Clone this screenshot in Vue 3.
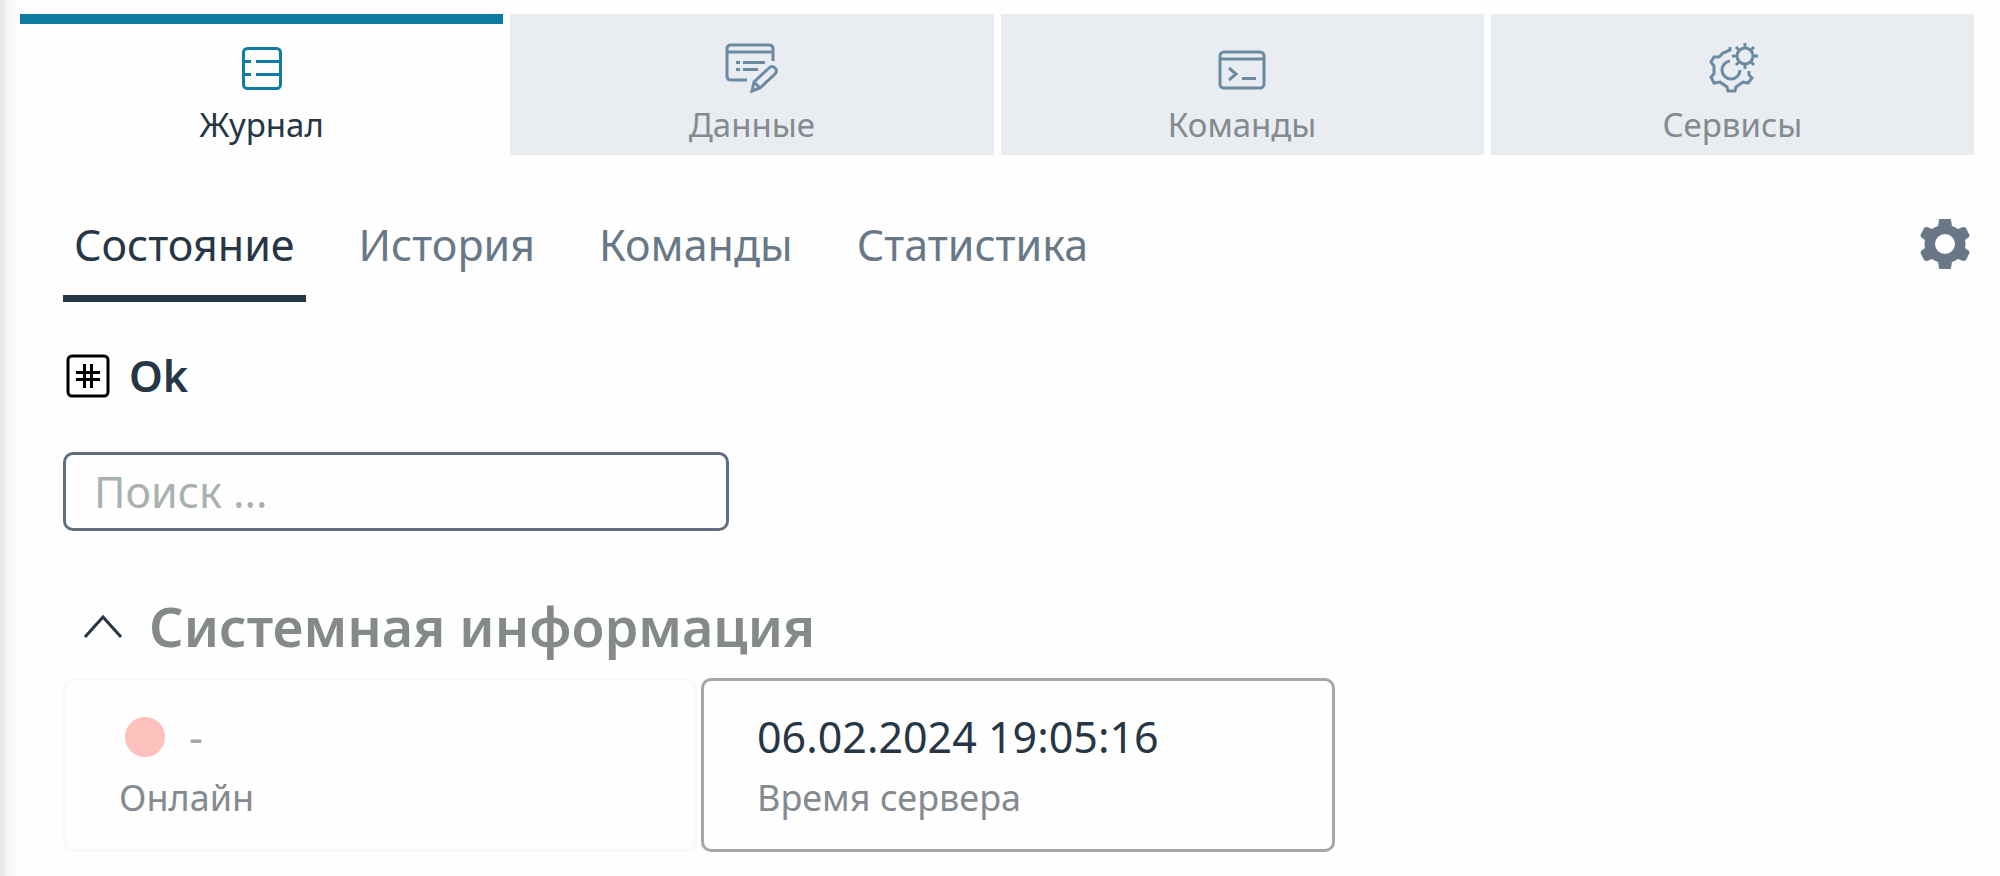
<template>
  <main class="panel">
    <nav class="tabs" aria-label="Разделы">
      <button
        v-for="tab in tabs"
        :key="tab.id"
        type="button"
        class="tabs__item"
        :class="{ 'tabs__item--active': tab.id === activeTab }"
        @click="activeTab = tab.id"
      >
        <svg v-if="tab.id === 'journal'" class="tabs__icon" viewBox="0 0 56 56">
          <rect x="9.500" y="8.500" width="37" height="40" rx="4" />
          <path d="M11 21.500h6M22 21.500h24M11 34.500h6M22 34.500h24" />
        </svg>
        <svg v-else-if="tab.id === 'data'" class="tabs__icon" viewBox="0 0 56 56">
          <path d="M23 40H7q-4 0-4-4V9q0-4 4-4h38q4 0 4 4v12M3 12h46" />
          <path d="M12 22.500h4M19 22.500h22M12 29.500h4M19 29.500h15" />
          <path d="M28 51l2-9 15-14q3-3 6 0t0 6L36 48zM30 42l6 6" />
        </svg>
        <svg v-else-if="tab.id === 'commands'" class="tabs__icon" viewBox="0 0 56 56">
          <rect x="6" y="12" width="44" height="36" rx="4" />
          <path d="M6 19h44" />
          <path d="M15 28l7 6-7 6M28 38.500h14" />
        </svg>
        <svg v-else class="tabs__icon" viewBox="0 0 56 56">
          <path d="M26 7v3l-7 3-4 4h-5l-3 5 3 4v8l-3 3 3 6 6-1 7 5 1 4h7l1-4 7-5 5 1 4-5-3-3v-4" />
          <path d="M26 21a9 9 0 1 0 10 9" />
          <circle cx="41" cy="16" r="8" />
          <path d="M41 8V3M41 29v-5M28 16h5M49 16h5M32 7l3 3M50 7l-3 3M32 25l3-3M50 25l-3-3" />
        </svg>
        <span class="tabs__label">{{ tab.label }}</span>
      </button>
    </nav>

    <section class="content">
      <div class="toolbar">
        <nav class="subtabs" aria-label="Журнал">
          <button
            v-for="item in subtabs"
            :key="item"
            type="button"
            class="subtabs__item"
            :class="{ 'subtabs__item--active': item === activeSubtab }"
            @click="activeSubtab = item"
          >
            {{ item }}
          </button>
        </nav>
        <button type="button" class="settings" aria-label="Настройки">
          <svg class="settings__icon" viewBox="0 0 50 50">
            <path
              d="M19 1Q19 0 20 0H30Q31 0 31 1L32 7Q35 8 38 10L43 8Q45 8 46 9L49 15Q50 16 49 18L45 21Q46 25 45 29L49 32Q50 34 49 35L46 41Q45 42 43 42L38 40Q35 42 32 43L31 49Q31 50 30 50H20Q19 50 19 49L18 43Q15 42 12 40L7 42Q5 42 4 41L1 35Q0 34 1 32L5 29Q4 25 5 21L1 18Q0 16 1 15L4 9Q5 8 7 8L12 10Q15 8 18 7ZM25 35a10 10 0 1 0 0-20 10 10 0 0 0 0 20z"
              fill-rule="evenodd"
            />
          </svg>
        </button>
      </div>

      <div class="status">
        <svg class="status__icon" viewBox="0 0 44 44">
          <rect x="2" y="2" width="40" height="40" rx="4" />
          <path d="M18.500 10v24M25.500 10v24M10 18.500h24M10 25.500h24" />
        </svg>
        <span class="status__text">Ok</span>
      </div>

      <input v-model="query" class="search" type="text" placeholder="Поиск ..." aria-label="Поиск" />

      <h2 class="group">
        <button type="button" class="group__toggle" :aria-expanded="expanded" @click="expanded = !expanded">
          <svg class="group__chevron" viewBox="0 0 40 24">
            <path d="M2 22L20 2l18 20" />
          </svg>
          <span>Системная информация</span>
        </button>
      </h2>

      <div v-if="expanded" class="cards">
        <article class="card card--muted">
          <div class="card__value">
            <span class="card__dot"></span>
            <span>-</span>
          </div>
          <div class="card__label">Онлайн</div>
        </article>
        <article class="card">
          <div class="card__value">06.02.2024 19:05:16</div>
          <div class="card__label">Время сервера</div>
        </article>
      </div>
    </section>
  </main>
</template>

<script setup>
import { ref } from 'vue'

const tabs = [
  { id: 'journal', label: 'Журнал' },
  { id: 'data', label: 'Данные' },
  { id: 'commands', label: 'Команды' },
  { id: 'services', label: 'Сервисы' }
]
const subtabs = ['Состояние', 'История', 'Команды', 'Статистика']

const activeTab = ref('journal')
const activeSubtab = ref('Состояние')
const query = ref('')
const expanded = ref(true)
</script>

<style>
body {
  margin: 0;
  background: #fefefe;
}
</style>

<style scoped>
.panel {
  box-sizing: border-box;
  min-height: 100vh;
  padding: 14px 26px 20px 20px;
  background: linear-gradient(to right, #e8e8e8 0, #eaeaea 3px, #f8f8f8 8px, #fcfcfc 16px, #fefefe 26px);
  font-family: 'Noto Sans', 'Open Sans', sans-serif;
  color: #263645;
}

button {
  margin: 0;
  padding: 0;
  border: none;
  background: none;
  font: inherit;
  color: inherit;
  cursor: pointer;
}

/* Main tabs */
.tabs {
  display: grid;
  grid-template-columns: repeat(4, 1fr);
  gap: 7px;
}

.tabs__item {
  display: flex;
  flex-direction: column;
  align-items: center;
  gap: 4px;
  padding: 16px 0 5px;
  border-top: 10px solid #e9edf1;
  background: #e9edf1;
  color: #848a8e;
}

.tabs__item--active {
  border-top-color: #0f7ba3;
  background: #fefefe;
  color: #263645;
}

.tabs__icon {
  width: 56px;
  height: 56px;
  fill: none;
  stroke: #6b8ba2;
  stroke-width: 3;
}

.tabs__item--active .tabs__icon {
  stroke: #0f7ba3;
}

.tabs__label {
  font-size: 33px;
  line-height: 50px;
}

/* Content */
.content {
  padding-left: 43px;
}

.toolbar {
  display: flex;
  justify-content: space-between;
  align-items: flex-start;
  padding-top: 60px;
}

.subtabs {
  display: flex;
  gap: 42px;
}

.subtabs__item {
  padding: 0 11px 20px;
  border-bottom: 7px solid transparent;
  font-size: 43px;
  line-height: 60px;
  color: #697886;
}

.subtabs__item--active {
  border-bottom-color: #263645;
  color: #263645;
}

.settings {
  display: flex;
  padding: 4px;
}

.settings__icon {
  width: 50px;
  height: 50px;
  fill: #697886;
}

.status {
  display: flex;
  align-items: center;
  gap: 19px;
  margin: 44px 0 46px 3px;
  font-size: 43px;
  font-weight: 600;
  line-height: 60px;
}

.status__icon {
  width: 44px;
  height: 44px;
  fill: none;
  stroke: #000;
  stroke-width: 3;
}

.search {
  display: block;
  box-sizing: border-box;
  width: 666px;
  max-width: 100%;
  height: 79px;
  padding: 0 28px;
  border: 3px solid #5f6f7f;
  border-radius: 10px;
  background: #fefefe;
  font-family: inherit;
  font-size: 43px;
  color: #263645;
}

.search::placeholder {
  color: #a9b1b0;
  opacity: 1;
}

.group {
  margin: 58px 0 14px 20px;
  font-size: 54px;
  font-weight: 600;
  line-height: 75px;
  color: #848a89;
}

.group__toggle {
  display: flex;
  align-items: center;
  gap: 26px;
}

.group__chevron {
  width: 40px;
  height: 24px;
  fill: none;
  stroke: #263645;
  stroke-width: 3;
}

.cards {
  display: flex;
  flex-wrap: wrap;
  gap: 4px;
}

.card {
  box-sizing: border-box;
  width: 634px;
  padding: 24px 53px 22px;
  border: 3px solid #a3a8a8;
  border-radius: 10px;
}

.card--muted {
  border-color: #f9f9f9;
}

.card__value {
  display: flex;
  align-items: center;
  gap: 24px;
  font-size: 43px;
  line-height: 64px;
}

.card--muted .card__value {
  color: #a3a8a8;
}

.card__dot {
  width: 40px;
  height: 40px;
  margin-left: 6px;
  border-radius: 50%;
  background: #fdc1bd;
}

.card__label {
  font-size: 36px;
  line-height: 58px;
  color: #848a8e;
}
</style>
